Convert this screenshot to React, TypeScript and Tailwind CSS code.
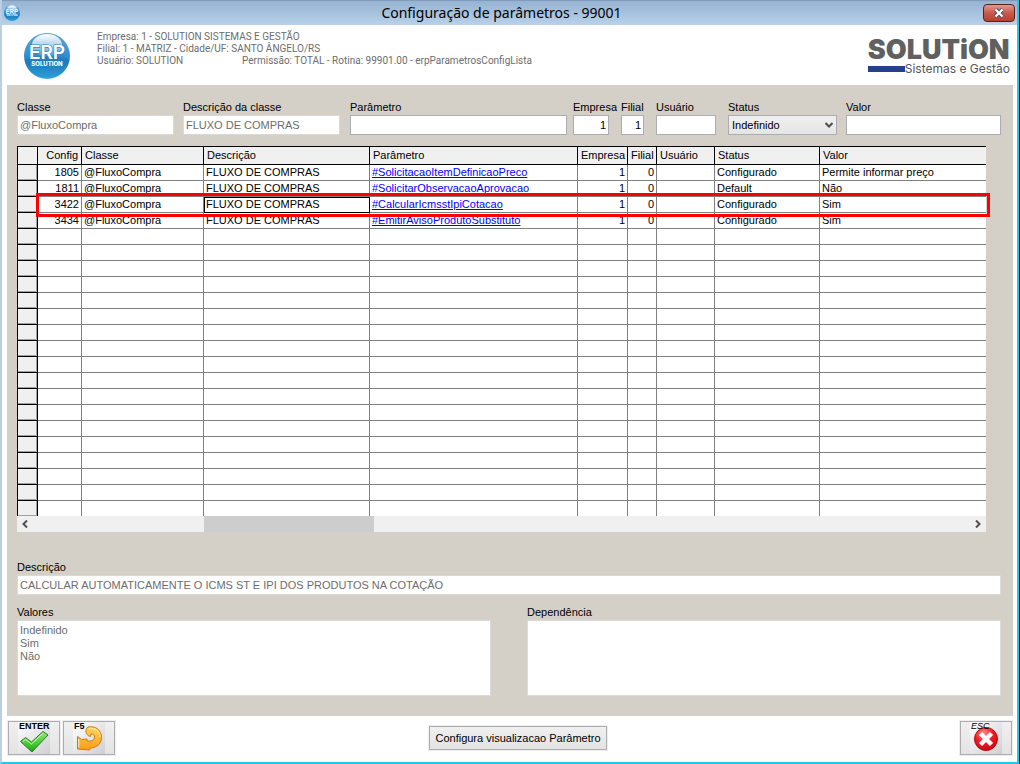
import { ReactNode } from 'react'

const rows = [
  { config: '1805', parametro: '#SolicitacaoItemDefinicaoPreco', status: 'Configurado', valor: 'Permite informar preço' },
  { config: '1811', parametro: '#SolicitarObservacaoAprovacao', status: 'Default', valor: 'Não' },
  { config: '3422', parametro: '#CalcularIcmsstIpiCotacao', status: 'Configurado', valor: 'Sim' },
  { config: '3434', parametro: '#EmitirAvisoProdutoSubstituto', status: 'Configurado', valor: 'Sim' },
]

const emptyRows = Array.from({ length: 18 })

function ErpLogo({ id, className }: { id: string; className: string }) {
  return (
    <svg viewBox="0 0 46 46" className={className} aria-hidden="true">
      <defs>
        <linearGradient id={`${id}-ball`} x1="0" y1="0" x2="0" y2="1">
          <stop offset="0" stopColor="#5f9fd0" />
          <stop offset="0.35" stopColor="#3f97d2" />
          <stop offset="0.65" stopColor="#2182c3" />
          <stop offset="1" stopColor="#3cb4e6" />
        </linearGradient>
        <linearGradient id={`${id}-shine`} x1="0" y1="0" x2="0" y2="1">
          <stop offset="0" stopColor="#fff" />
          <stop offset="1" stopColor="#fff" stopOpacity="0.15" />
        </linearGradient>
      </defs>
      <circle cx="23" cy="23" r="23" fill={`url(#${id}-ball)`} />
      <ellipse cx="23" cy="12" rx="15" ry="11" fill={`url(#${id}-shine)`} />
      <path d="M0.500 27c8-5 35-6 45 0a23 23 0 0 1-45 0Z" fill="#0b66ad" opacity="0.25" />
      <text
        x="23"
        y="26"
        textAnchor="middle"
        fontFamily="Inter, sans-serif"
        fontSize="19"
        fontWeight="600"
        fill="#fff"
        stroke="#2f86c4"
        strokeWidth="1.200"
        paintOrder="stroke"
      >
        ERP
      </text>
      <text x="23" y="33" textAnchor="middle" fontFamily="Inter, sans-serif" fontSize="6" fontWeight="800" fill="#fff">
        SOLUTION
      </text>
    </svg>
  )
}

function CheckIcon() {
  return (
    <svg viewBox="0 0 32 32" className="size-8" aria-hidden="true">
      <defs>
        <linearGradient id="check" x1="0" y1="0" x2="0" y2="1">
          <stop offset="0" stopColor="#9be57c" />
          <stop offset="0.6" stopColor="#43cb33" />
          <stop offset="1" stopColor="#1fa017" />
        </linearGradient>
      </defs>
      <path d="M2.500 19.500l5-4 6 4.500L25 9.500l5 3.500L14 30Z" fill="url(#check)" stroke="#2a7f22" strokeLinejoin="round" />
      <path d="M5 19.500l2.500-2.200 6 4.700L25 11.300" fill="none" stroke="#d3f8c4" />
    </svg>
  )
}

function ReturnIcon() {
  return (
    <svg viewBox="0 0 32 32" className="size-8" aria-hidden="true">
      <defs>
        <linearGradient id="return" x1="0" y1="0" x2="0" y2="1">
          <stop offset="0" stopColor="#ffd65c" />
          <stop offset="1" stopColor="#f99a1c" />
        </linearGradient>
      </defs>
      <path
        d="M15 5c8-1.500 13.500 3.500 13.500 10.500 0 7-5.500 10.500-11 10.500l-1 2-12-1V14.500l4 3 5.500-.5v2c4.500.5 7.500-1 7.500-4 0-2.500-2-3.500-3.500-3l-.5 2.500c-5-1-6-7-2.500-9.500Z"
        fill="url(#return)"
        stroke="#cf7a10"
        strokeLinejoin="round"
      />
      <path d="M16 6.500c6-1 11 2.500 11 8.500M5.800 17v8.500" fill="none" stroke="#ffeeb0" />
    </svg>
  )
}

function CancelIcon() {
  return (
    <svg viewBox="0 0 32 32" className="size-8" aria-hidden="true">
      <defs>
        <radialGradient id="cancel" cx="0.4" cy="0.25" r="0.8">
          <stop offset="0" stopColor="#ff8c8c" />
          <stop offset="0.5" stopColor="#f01c24" />
          <stop offset="1" stopColor="#c40812" />
        </radialGradient>
      </defs>
      <circle cx="16" cy="17" r="11.500" fill="url(#cancel)" stroke="#b50c12" />
      <path d="M10.500 11.500l11 11M21.500 11.500l-11 11" stroke="#fff" strokeWidth="4.500" />
    </svg>
  )
}

function ToolButton({ label, italic, children }: { label: string; italic?: boolean; children: ReactNode }) {
  return (
    <button
      type="button"
      className="flex h-[34px] w-[52px] justify-center border border-[#adadad] bg-gradient-to-b from-[#f0f0f0] to-[#e3e3e3] outline outline-[#eeeeee]"
    >
      <span className="relative size-8 bg-gradient-to-br from-white to-[#cfcfd4]">
        {children}
        <span className={`absolute left-px top-0 text-[9px] leading-[9px] text-black ${italic ? 'italic' : 'font-bold'}`}>{label}</span>
      </span>
    </button>
  )
}

type FieldProps = { id: string; label: string; value?: string; muted?: boolean; right?: boolean; className?: string }

function Field({ id, label, value = '', muted, right, className }: FieldProps) {
  return (
    <div className={className}>
      <label htmlFor={id} className="block h-4 leading-4">
        {label}
      </label>
      <input
        id={id}
        defaultValue={value}
        readOnly={muted}
        className={`block h-5 w-full border bg-white px-0.5 outline-none ${muted ? 'border-[#d9d9d9] text-[#6d6d6d]' : 'border-[#abadb3]'} ${right ? 'text-right' : ''}`}
      />
    </div>
  )
}

function HeadCell({ children, right }: { children?: ReactNode; right?: boolean }) {
  return (
    <th
      className={`h-[18px] border-b border-r border-black bg-[#f0f0f0] px-[3px] py-0 font-normal last:border-r-0 ${right ? 'text-right' : 'text-left'}`}
    >
      {children}
    </th>
  )
}

const cell = 'border-b border-r border-[#808080] px-0.5 py-0 last:border-r-0'
const rowHead = 'border-b border-x border-black bg-[#f0f0f0] p-0 shadow-[inset_-1px_-1px_0_#a0a0a0]'

function ParameterTable() {
  return (
    <div className="relative mr-[15px]">
      <table className="w-full table-fixed border-separate border-spacing-0 whitespace-nowrap border-t border-black bg-white leading-[15px]">
        <colgroup>
          <col className="w-[21px]" />
          <col className="w-[44px]" />
          <col className="w-[122px]" />
          <col className="w-[166px]" />
          <col />
          <col className="w-[50px]" />
          <col className="w-[29px]" />
          <col className="w-[58px]" />
          <col className="w-[105px]" />
          <col className="w-[166px]" />
        </colgroup>
        <thead>
          <tr>
            <th className="border-x border-b border-black bg-[#f0f0f0] p-0" />
            <HeadCell right>Config</HeadCell>
            <HeadCell>Classe</HeadCell>
            <HeadCell>Descrição</HeadCell>
            <HeadCell>Parâmetro</HeadCell>
            <HeadCell>Empresa</HeadCell>
            <HeadCell>Filial</HeadCell>
            <HeadCell>Usuário</HeadCell>
            <HeadCell>Status</HeadCell>
            <HeadCell>Valor</HeadCell>
          </tr>
        </thead>
        <tbody>
          {rows.map((row) => (
            <tr key={row.config} className="h-4">
              <td className={rowHead} />
              <td className={`${cell} text-right`}>{row.config}</td>
              <td className={cell}>@FluxoCompra</td>
              <td className={`${cell} ${row.config === '3422' ? 'outline outline-black -outline-offset-1' : ''}`}>FLUXO DE COMPRAS</td>
              <td className={cell}>
                <a href="#parametro" className="text-[#0000ff] underline">
                  {row.parametro}
                </a>
              </td>
              <td className={`${cell} text-right`}>1</td>
              <td className={`${cell} text-right`}>0</td>
              <td className={cell} />
              <td className={cell}>{row.status}</td>
              <td className={cell}>{row.valor}</td>
            </tr>
          ))}
          {emptyRows.map((_, i) => (
            <tr key={i} className="h-4 last:h-[15px] last:*:border-b-0">
              <td className={rowHead} />
              <td className={cell} />
              <td className={cell} />
              <td className={cell} />
              <td className={cell} />
              <td className={cell} />
              <td className={cell} />
              <td className={cell} />
              <td className={cell} />
              <td className={cell} />
            </tr>
          ))}
        </tbody>
      </table>
      <div className="flex h-4 items-stretch bg-[#f0f0f0]">
        <button type="button" aria-label="Rolar para a esquerda" className="flex w-4 items-center justify-center">
          <svg viewBox="0 0 8 8" className="size-2">
            <path d="M6 0.500L2.500 4 6 7.500" fill="none" stroke="#505050" strokeWidth="2" />
          </svg>
        </button>
        <div className="flex-1 px-[171px]">
          <div className="h-full w-[170px] bg-[#cdcdcd]" />
        </div>
        <button type="button" aria-label="Rolar para a direita" className="flex w-4 items-center justify-center">
          <svg viewBox="0 0 8 8" className="size-2">
            <path d="M2 0.500L5.500 4 2 7.500" fill="none" stroke="#505050" strokeWidth="2" />
          </svg>
        </button>
      </div>
      <div className="pointer-events-none absolute -right-1 left-[19px] top-[47px] h-6 border-3 border-[#ff0000]" />
    </div>
  )
}

export default function App() {
  return (
    <div className="flex min-h-screen flex-col border-b border-r border-black bg-white font-['Liberation_Sans',sans-serif] text-[11px] text-black">
      <div className="flex flex-1 flex-col border-x-2 border-b-2 border-b-[#22c8ea] border-l-[#b8d0e6] border-r-[#22c8ea]">
        <header className="flex h-[25px] items-center border-t border-[#7f9dbb] bg-gradient-to-b from-[#95b3d1] to-[#b9d1ea]">
          <ErpLogo id="small" className="ml-0.5 size-4" />
          <h1 className="flex-1 text-center font-['Noto_Sans',sans-serif] text-[14px] leading-6">Configuração de parâmetros - 99001</h1>
          <button
            type="button"
            aria-label="Fechar"
            className="mr-0.5 flex h-[18px] w-8 items-center justify-center rounded-sm border border-[#5a1f1a] bg-gradient-to-b from-[#dd9b90] via-[#c9594a] to-[#b8402c]"
          >
            <svg viewBox="0 0 12 10" className="h-2.5 w-3">
              <path d="M2.500 1.500l7 7M9.500 1.500l-7 7" stroke="#4a4f66" strokeWidth="4" />
              <path d="M2.500 1.500l7 7M9.500 1.500l-7 7" stroke="#fff" strokeWidth="2.200" />
            </svg>
          </button>
        </header>

        <section className="flex h-[60px] items-start pl-[22px] pr-[7px]">
          <ErpLogo id="large" className="mt-2 size-[46px]" />
          <div className="ml-[27px] mt-[6px] font-['Roboto',sans-serif] text-[10px] leading-3 text-[#6d6d6d]">
            <p>Empresa: 1 - SOLUTION SISTEMAS E GESTÃO</p>
            <p>Filial: 1 - MATRIZ - Cidade/UF: SANTO ÂNGELO/RS</p>
            <p className="flex">
              <span className="w-[145px]">Usuário: SOLUTION</span>
              <span>Permissão: TOTAL - Rotina: 99901.00 - erpParametrosConfigLista</span>
            </p>
          </div>
          <div className="ml-auto mt-3 font-['Inter',sans-serif]">
            <div className="text-[27px] font-black leading-[26px] text-[#606060]">SOLUTiON</div>
            <div className="flex items-center justify-between">
              <span className="h-1.5 w-[37px] bg-[#24428c]" />
              <span className="text-[12px] leading-3 text-[#555]">Sistemas e Gestão</span>
            </div>
          </div>
        </section>

        <main className="ml-[5px] mr-1 flex-1 bg-[#d4d0c8] pb-5 pl-[10px] pr-3 pt-[14px]">
          <div className="mb-[11px] grid grid-cols-[166fr_167fr_223fr_48px_35px_72px_118px_155fr]">
            <Field id="classe" label="Classe" value="@FluxoCompra" muted className="pr-[9px]" />
            <Field id="descricao-classe" label="Descrição da classe" value="FLUXO DE COMPRAS" muted className="pr-[10px]" />
            <Field id="parametro" label="Parâmetro" className="pr-[6px]" />
            <Field id="empresa" label="Empresa" value="1" right className="pr-3" />
            <Field id="filial" label="Filial" value="1" right className="pr-3" />
            <Field id="usuario" label="Usuário" className="pr-3" />
            <div className="pr-[9px]">
              <label htmlFor="status" className="block h-4 leading-4">
                Status
              </label>
              <div className="relative">
                <select
                  id="status"
                  className="block h-5 w-full appearance-none border border-[#abadb3] bg-gradient-to-b from-[#f0f0f0] to-[#e5e5e5] px-[3px] outline-none"
                >
                  <option>Indefinido</option>
                  <option>Configurado</option>
                  <option>Default</option>
                </select>
                <svg viewBox="0 0 8 8" className="pointer-events-none absolute right-1 top-1.5 size-2">
                  <path d="M0.500 2L4 5.500 7.500 2" fill="none" stroke="#505050" strokeWidth="2" />
                </svg>
              </div>
            </div>
            <Field id="valor" label="Valor" />
          </div>

          <ParameterTable />

          <Field
            id="descricao"
            label="Descrição"
            value="CALCULAR AUTOMATICAMENTE O ICMS ST E IPI DOS PRODUTOS NA COTAÇÃO"
            muted
            className="mt-[27px]"
          />

          <div className="mt-[9px] grid grid-cols-2 gap-9">
            <div>
              <label htmlFor="valores" className="block h-4 leading-4">
                Valores
              </label>
              <textarea
                id="valores"
                readOnly
                defaultValue={'Indefinido\nSim\nNão'}
                className="block h-[76px] w-full resize-none border border-[#d9d9d9] bg-white px-0.5 py-[3px] leading-[13px] text-[#6d6d6d] outline-none"
              />
            </div>
            <div>
              <label htmlFor="dependencia" className="block h-4 leading-4">
                Dependência
              </label>
              <textarea
                id="dependencia"
                readOnly
                className="block h-[76px] w-full resize-none border border-[#d9d9d9] bg-white px-0.5 py-[3px] leading-[13px] outline-none"
              />
            </div>
          </div>
        </main>

        <footer className="flex h-[46px] items-start justify-between pl-1.5 pr-[5px] pt-[5px]">
          <div className="flex flex-1 gap-[3px]">
            <ToolButton label="ENTER">
              <CheckIcon />
            </ToolButton>
            <ToolButton label="F5">
              <ReturnIcon />
            </ToolButton>
          </div>
          <button
            type="button"
            className="ml-4 mt-[5px] h-6 w-[178px] whitespace-nowrap border border-[#adadad] bg-gradient-to-b from-[#f0f0f0] to-[#e3e3e3] outline outline-[#eeeeee]"
          >
            Configura visualizacao Parâmetro
          </button>
          <div className="flex flex-1 justify-end">
            <ToolButton label="ESC" italic>
              <CancelIcon />
            </ToolButton>
          </div>
        </footer>
      </div>
    </div>
  )
}
